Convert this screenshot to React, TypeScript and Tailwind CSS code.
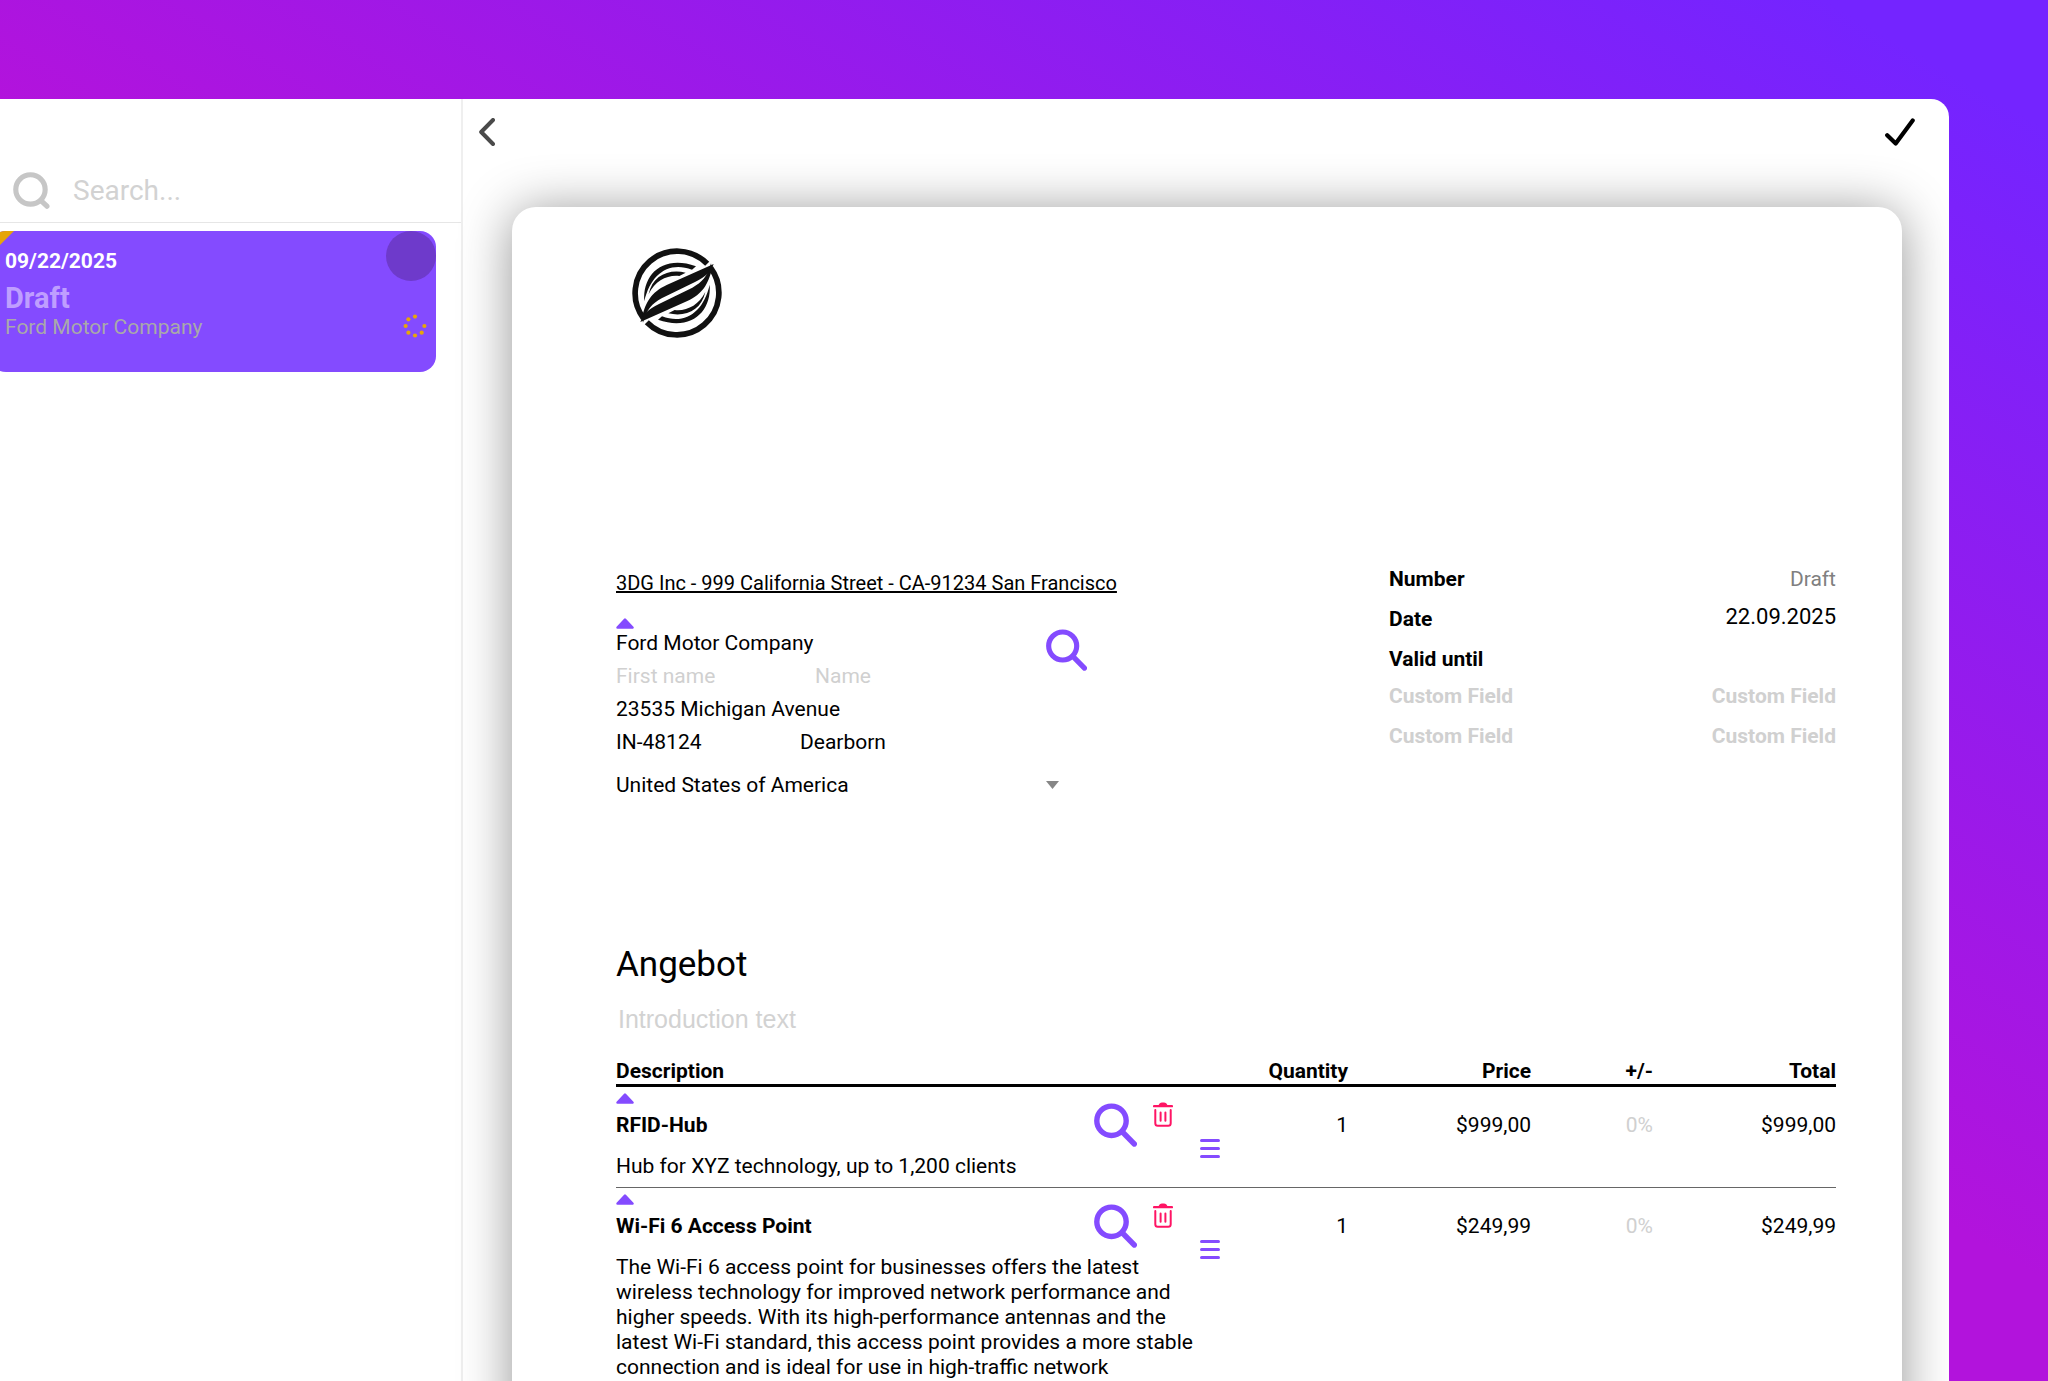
import React from "react";

const FIELD = "min-w-0 bg-transparent p-0 leading-6 outline-none placeholder:text-[#d0d0d0] placeholder:opacity-100";

function Logo() {
  const half = (
    <>
      <path d="M321.6 99.500A126 126 0 0 0 130.400 262.800" fill="none" stroke="#111" strokeWidth="17" />
      <path d="M341 100L200 163C154 185 138 212 126 260L129 276C140 236 156 219 185 203L285 154C318 138 332 124 341 100Z" />
      <path d="M133 212C127 130 190 72 288 107L276 117C206 91 152 130 133 212Z" />
      <path d="M146 190C158 135 205 114 257 126L238 136C202 132 166 150 146 190Z" />
    </>
  );
  return (
    <svg viewBox="96 52 270 270" className="ml-4 block size-[90px]" fill="#111" role="img" aria-label="Company logo">
      {half}
      <g transform="rotate(180 231 187)">{half}</g>
    </svg>
  );
}

function Magnifier({ className }: { className: string }) {
  return (
    <svg viewBox="0 0 43 44" className={className} fill="none" stroke="currentColor" strokeWidth="5.4">
      <circle cx="17.5" cy="17.8" r="14.7" />
      <path d="M28.5 29L40.3 41" strokeLinecap="round" />
    </svg>
  );
}

function Trash() {
  return (
    <svg viewBox="0 0 20 25" className="h-[25px] w-5" fill="none" stroke="currentColor" strokeWidth="2" strokeLinecap="round">
      <path d="M1 4.2H19" strokeWidth="2.2" />
      <path d="M5.500 3.6C6 1.4 7.4.4 9 .4H11C12.600.4 14 1.400 14.500 3.600Z" fill="currentColor" stroke="none" />
      <path d="M2.300 8V21.200C2.300 22.800 3.200 23.700 4.800 23.700H15.200C16.800 23.700 17.700 22.800 17.700 21.200V8" />
      <path d="M7.600 10.500V18.800M12.400 10.500V18.800" />
    </svg>
  );
}

function UpMarker() {
  return (
    <svg viewBox="0 0 18 11" className="block h-[11px] w-[18px] text-[#844bff]" fill="currentColor" stroke="currentColor" strokeWidth="2.500" strokeLinejoin="round">
      <path d="M9 1.600L16.500 9.600H1.500Z" />
    </svg>
  );
}

const dots = [
  [12, 2.6], [5.400, 5.300], [2.600, 12], [5.400, 18.700], [12, 21.500], [18.700, 18.700], [21.400, 12],
];

const items = [
  { title: "RFID-Hub", text: "Hub for XYZ technology, up to 1,200 clients", rows: 1, qty: "1", price: "$999,00" },
  {
    title: "Wi-Fi 6 Access Point",
    text: "The Wi-Fi 6 access point for businesses offers the latest wireless technology for improved network performance and higher speeds. With its high-performance antennas and the latest Wi-Fi standard, this access point provides a more stable connection and is ideal for use in high-traffic network",
    rows: 6,
    qty: "1",
    price: "$249,99",
  },
];

function Sidebar() {
  return (
    <aside className="w-[463px] shrink-0 border-r-2 border-[#efefef]">
      <label className="flex items-center border-b border-[#e6e6e6] pt-16 pb-1 pl-[13px]">
        <svg viewBox="0 0 36 36" className="my-[9px] size-[37px] shrink-0 text-[#c6c6c6]" fill="none" stroke="currentColor" strokeWidth="5">
          <circle cx="17" cy="17" r="14.300" />
          <path d="M28 28.500L33 33.300" strokeLinecap="round" />
        </svg>
        <input type="search" aria-label="Search" placeholder="Search..." className="ml-[23px] min-w-0 flex-1 bg-transparent p-0 text-[28px] leading-9 outline-none placeholder:text-[#d2d2d2] placeholder:opacity-100" />
      </label>
      <article className="relative mt-2 mr-[25px] -ml-2.5 h-[141px] overflow-hidden rounded-2xl bg-[#844bff] pt-4 pl-[15px]">
        <svg viewBox="0 0 24 24" className="absolute top-0 left-0 size-6" fill="#e6a50a">
          <path d="M0 0H24L0 24Z" />
        </svg>
        <span className="absolute top-0 right-0 size-[50px] rounded-full bg-[#6e3acb]" />
        <p className="leading-7 font-bold text-white">09/22/2025</p>
        <p className="mt-1.5 text-[29px] leading-[34px] font-bold text-[#bf9eff]">Draft</p>
        <p className="leading-6 text-[#a9a9a9]">Ford Motor Company</p>
        <svg viewBox="0 0 24 24" className="absolute right-[9px] bottom-[34px] size-6" fill="#e6a50a">
          {dots.map(([x, y]) => (
            <circle key={`${x}-${y}`} cx={x} cy={y} r="2.100" />
          ))}
        </svg>
      </article>
    </aside>
  );
}

function Recipient() {
  return (
    <section className="w-[520px] pt-[3px]">
      <p className="text-xl leading-[26px] whitespace-nowrap underline">3DG Inc - 999 California Street - CA-91234 San Francisco</p>
      <div className="mt-[22px]">
        <UpMarker />
      </div>
      <div className="flex items-start">
        <div className="flex w-[430px] flex-col gap-[9px] pt-0.5">
          <input aria-label="Company" defaultValue="Ford Motor Company" className={FIELD} />
          <div className="flex">
            <input aria-label="First name" placeholder="First name" className={`w-[199px] ${FIELD}`} />
            <input aria-label="Name" placeholder="Name" className={`flex-1 ${FIELD}`} />
          </div>
          <input aria-label="Street" defaultValue="23535 Michigan Avenue" className={FIELD} />
          <div className="flex">
            <input aria-label="Postcode" defaultValue="IN-48124" className={`w-[184px] ${FIELD}`} />
            <input aria-label="City" defaultValue="Dearborn" className={`flex-1 ${FIELD}`} />
          </div>
        </div>
        <button type="button" aria-label="Find customer" className="text-[#844bff]">
          <Magnifier className="block h-[42px] w-[41px]" />
        </button>
      </div>
      <div className="relative mt-[19px] w-[443px]">
        <select aria-label="Country" className="block w-full appearance-none bg-transparent p-0 leading-6 outline-none">
          <option>United States of America</option>
        </select>
        <svg viewBox="0 0 13 8" className="pointer-events-none absolute top-2 right-0 h-2 w-[13px]" fill="#868686">
          <path d="M0 0H13L6.500 8Z" />
        </svg>
      </div>
    </section>
  );
}

function Details() {
  return (
    <section className="w-[447px]">
      <dl className="grid grid-cols-2 items-start gap-y-4 leading-6">
        <dt className="font-bold">Number</dt>
        <dd className="text-right text-[#808080]">Draft</dd>
        <dt className="font-bold">
          <label htmlFor="date">Date</label>
        </dt>
        <dd className="h-6">
          <input id="date" defaultValue="22.09.2025" className="block h-5 w-full bg-transparent p-0 text-right text-[22px] outline-none" />
        </dd>
        <dt className="font-bold">
          <label htmlFor="valid">Valid until</label>
        </dt>
        <dd className="h-6">
          <input id="valid" className="block w-full bg-transparent p-0 text-right leading-6 outline-none" />
        </dd>
      </dl>
      <div className="mt-[13px] grid grid-cols-2 gap-y-4 font-bold">
        {[1, 2].map((n) => (
          <React.Fragment key={n}>
            <input aria-label={`Custom field ${n} name`} placeholder="Custom Field" className={FIELD} />
            <input aria-label={`Custom field ${n} value`} placeholder="Custom Field" className={`text-right ${FIELD}`} />
          </React.Fragment>
        ))}
      </div>
    </section>
  );
}

function Items() {
  return (
    <table className="mt-[26px] w-full table-fixed border-separate border-spacing-0">
      <colgroup>
        <col />
        <col className="w-[127px]" />
        <col className="w-[183px]" />
        <col className="w-[122px]" />
        <col className="w-[183px]" />
      </colgroup>
      <thead>
        <tr className="leading-6">
          <th className="border-b-3 border-black p-0 pb-px text-left">Description</th>
          {["Quantity", "Price", "+/-", "Total"].map((h) => (
            <th key={h} className="border-b-3 border-black p-0 pb-px text-right">{h}</th>
          ))}
        </tr>
      </thead>
      <tbody>
        {items.map((item) => (
          <tr key={item.title} className="align-top leading-6">
            <td className="border-b border-[#666] p-0 pb-2">
              <div className="flex h-[67px] items-start">
                <div className="w-[478px] pt-1.5">
                  <UpMarker />
                  <input aria-label="Item" defaultValue={item.title} className={`mt-[9px] block w-full font-bold ${FIELD}`} />
                </div>
                <button type="button" aria-label="Find item" className="mt-4 text-[#844bff]">
                  <Magnifier className="block h-11 w-[43px]" />
                </button>
                <button type="button" aria-label="Delete item" className="mt-[15px] ml-4 text-[#ff1464]">
                  <Trash />
                </button>
                <button type="button" aria-label="Move item" className="mt-[52px] ml-[27px] flex w-5 flex-col gap-[5px]">
                  <span className="h-[3px] rounded-full bg-[#844bff]" />
                  <span className="h-[3px] rounded-full bg-[#844bff]" />
                  <span className="h-[3px] rounded-full bg-[#844bff]" />
                </button>
              </div>
              <textarea aria-label="Item description" rows={item.rows} defaultValue={item.text} className="block w-[594px] resize-none overflow-hidden bg-transparent p-0 leading-[25px] outline-none" />
            </td>
            <td className="border-b border-[#666] p-0 pt-[26px]">
              <input aria-label="Quantity" defaultValue={item.qty} className={`block w-full text-right ${FIELD}`} />
            </td>
            <td className="border-b border-[#666] p-0 pt-[26px]">
              <input aria-label="Price" defaultValue={item.price} className={`block w-full text-right ${FIELD}`} />
            </td>
            <td className="border-b border-[#666] p-0 pt-[26px]">
              <input aria-label="Discount" placeholder="0%" className={`block w-full text-right ${FIELD}`} />
            </td>
            <td className="border-b border-[#666] p-0 pt-[26px] text-right">{item.price}</td>
          </tr>
        ))}
      </tbody>
    </table>
  );
}

export default function App() {
  return (
    <div className="h-screen overflow-hidden bg-[linear-gradient(30deg,#b213dc_50%,#7424ff_95%)] pt-[99px] pr-[99px] font-[Roboto,sans-serif] text-[21px] text-black">
      <div className="flex h-full overflow-hidden rounded-tr-[18px] bg-white">
        <Sidebar />
        <main className="min-w-0 flex-1">
          <header className="flex h-[108px] items-start justify-between pt-[19px] pr-[34px] pl-4">
            <button type="button" aria-label="Back">
              <svg viewBox="0 0 16 28" className="block h-7 w-4" fill="none" stroke="#4a4a4a" strokeWidth="4" strokeLinecap="round" strokeLinejoin="round">
                <path d="M14 2L2.200 14L14 26" />
              </svg>
            </button>
            <button type="button" aria-label="Save">
              <svg viewBox="0 0 30 28" className="block h-7 w-[30px]" fill="none" stroke="#000" strokeWidth="4.200" strokeLinecap="round" strokeLinejoin="round">
                <path d="M2.200 17.200L10.700 25.600L27.700 2.400" />
              </svg>
            </button>
          </header>
          <div className="mr-[47px] ml-[49px] rounded-3xl bg-white pt-[41px] pr-[66px] pb-20 pl-[104px] shadow-[0_4px_52px_rgba(0,0,0,0.42)]">
            <Logo />
            <div className="mt-[229px] flex items-start justify-between">
              <Recipient />
              <Details />
            </div>
            <h1 className="mt-[147px] text-[35px] leading-[42px]">Angebot</h1>
            <textarea aria-label="Introduction text" rows={1} placeholder="Introduction text" className="mt-[19px] block w-full resize-none overflow-hidden bg-transparent p-0 pl-0.5 font-['Liberation_Sans',sans-serif] text-[25px] leading-7 outline-none placeholder:text-[#d2d2d2] placeholder:opacity-100" />
            <Items />
          </div>
        </main>
      </div>
    </div>
  );
}
